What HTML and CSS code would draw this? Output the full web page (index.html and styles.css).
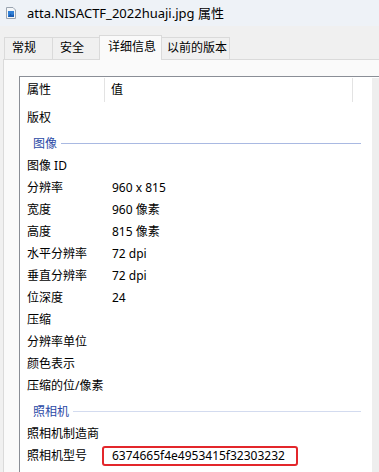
FILE: index.html
```html
<!DOCTYPE HTML>
<html>

<head>
  <meta charset="utf-8">
  <title>atta.NISACTF_2022huaji.jpg 属性</title>
  <link rel="stylesheet" href="styles.css">
</head>

<body>
  <div class="window">
    <div class="titlebar">
      <svg class="file-icon" width="10" height="12" viewBox="0 0 10 12">
        <path d="M0.5 0.5 H7 L9.5 3 V11.5 H0.5 Z" fill="#f4f6f8" stroke="#9aa4b0" />
        <rect x="2" y="4" width="6" height="6" fill="#2f7fd6" />
        <path d="M2 10 L4.5 6.5 L6 8.5 L8 7 V10 Z" fill="#1a5bb0" />
      </svg>
      <span class="title">atta.NISACTF_2022huaji.jpg 属性</span>
    </div>

    <div class="tabs">
      <div class="tab tab-general">常规</div>
      <div class="tab tab-security">安全</div>
      <div class="tab tab-details active">详细信息</div>
      <div class="tab tab-previous">以前的版本</div>
    </div>

    <div class="panel">
      <div class="listbox">
        <div class="list">
          <div class="head">
            <div class="col-name">属性</div>
            <div class="sep"></div>
            <div class="col-value">值</div>
            <div class="sep"></div>
          </div>
          <div class="rows">
            <div class="row"><div class="col-name">版权</div><div class="col-value"></div></div>
            <div class="group"><span>图像</span><div class="group-line"></div></div>
            <div class="row"><div class="col-name">图像 ID</div><div class="col-value"></div></div>
            <div class="row"><div class="col-name">分辨率</div><div class="col-value">960 x 815</div></div>
            <div class="row"><div class="col-name">宽度</div><div class="col-value">960 像素</div></div>
            <div class="row"><div class="col-name">高度</div><div class="col-value">815 像素</div></div>
            <div class="row"><div class="col-name">水平分辨率</div><div class="col-value">72 dpi</div></div>
            <div class="row"><div class="col-name">垂直分辨率</div><div class="col-value">72 dpi</div></div>
            <div class="row"><div class="col-name">位深度</div><div class="col-value">24</div></div>
            <div class="row"><div class="col-name">压缩</div><div class="col-value"></div></div>
            <div class="row"><div class="col-name">分辨率单位</div><div class="col-value"></div></div>
            <div class="row"><div class="col-name">颜色表示</div><div class="col-value"></div></div>
            <div class="row"><div class="col-name">压缩的位/像素</div><div class="col-value"></div></div>
            <div class="group"><span>照相机</span><div class="group-line light"></div></div>
            <div class="row"><div class="col-name">照相机制造商</div><div class="col-value"></div></div>
            <div class="row">
              <div class="col-name">照相机型号</div>
              <div class="col-value"><span class="mark">6374665f4e4953415f32303232</span></div>
            </div>
          </div>
        </div>
        <div class="scrollbar"></div>
      </div>
    </div>
  </div>
</body>

</html>
```

FILE: styles.css
```css
* {
  margin: 0;
  padding: 0;
  box-sizing: border-box;
}

html,
body {
  height: 100%;
  overflow: hidden;
}

body {
  background: #f0f0f0;
  font-family: "Noto Sans", "Noto Sans CJK SC", sans-serif;
  font-size: 12px;
  color: #000;
}

.window {
  display: flex;
  flex-direction: column;
  height: 100%;
}

/* 标题栏 */
.titlebar {
  height: 26px;
  display: flex;
  align-items: center;
  padding-left: 6px;
  background: #eef2f7;
}

.file-icon {
  display: block;
  margin-top: -1px;
}

.title {
  margin-left: 11px;
  font-size: 13px;
  line-height: 16px;
}

/* 选项卡 */
.tabs {
  display: flex;
  align-items: flex-end;
  height: 33px;
  padding-left: 4px;
}

.tab {
  height: 22px;
  line-height: 20px;
  padding-left: 7px;
  border: 1px solid #dadada;
  border-bottom: none;
  border-right: none;
  background: #f0f0f0;
  white-space: nowrap;
}

.tab-general {
  width: 48px;
}

.tab-security {
  width: 47px;
}

.tab-details {
  width: 63px;
  padding-left: 8px;
}

.tab-previous {
  width: 69px;
  padding-left: 5px;
  border-right: 1px solid #dadada;
}

.tab.active {
  height: 25px;
  line-height: 22px;
  background: #fafafa;
  border-right: 1px solid #dadada;
  margin-right: -1px;
  margin-bottom: -1px;
  position: relative;
  z-index: 1;
}

/* 内容区 */
.panel {
  flex: 1;
  margin-left: 3px;
  padding: 16px 0 0 15px;
  background: #fafafa;
  border-top: 1px solid #dadada;
  border-left: 1px solid #dadada;
  display: flex;
  min-height: 0;
}

.listbox {
  flex: 1;
  display: flex;
  background: #fff;
  border-top: 1px solid #8a8e96;
  border-left: 1px solid #8a8e96;
}

.list {
  flex: 1;
}

.scrollbar {
  width: 7px;
  margin-top: 1px;
  background: #eeeeee;
}

.head {
  display: flex;
  height: 26px;
  line-height: 26px;
}

.head .col-name {
  width: 84px;
  padding-left: 7px;
}

.head .col-value {
  width: 247px;
  padding-left: 6px;
}

.sep {
  width: 1px;
  margin: 1px 0;
  background: #e3e3e3;
}

.rows {
  padding-top: 4px;
}

.row {
  display: flex;
  height: 22px;
  line-height: 22px;
}

.row .col-name {
  width: 85px;
  padding-left: 7px;
  white-space: nowrap;
}

.row .col-value {
  flex: 1;
  padding-left: 7px;
  white-space: nowrap;
}

.group {
  display: flex;
  align-items: center;
  height: 26px;
  padding: 2px 11px 0 13px;
  color: #2b4aa6;
}

.group-line {
  flex: 1;
  height: 1px;
  margin-left: 4px;
  background: #a9b9e2;
}

.group-line.light {
  background: #d3dbef;
}

/* 标注框 */
.mark {
  display: inline-block;
  height: 20px;
  line-height: 16px;
  margin-left: -10px;
  padding: 0 11px 0 8px;
  border: 2px solid #e3262b;
  border-radius: 3px;
  vertical-align: top;
  margin-top: 1px;
}
```
